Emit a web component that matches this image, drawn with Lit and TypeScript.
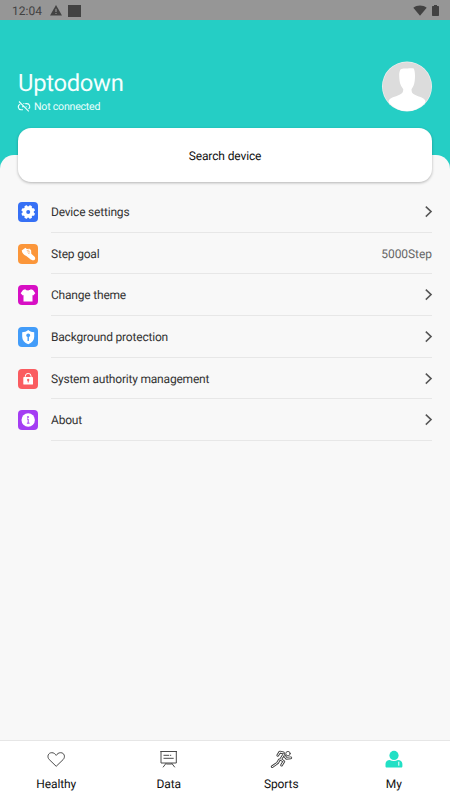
import { LitElement, html, css, svg } from "lit";
import { customElement } from "lit/decorators.js";

const gear = svg`<rect width="20" height="20" rx="4" fill="#3670f5"/>
  <g transform="translate(10.200 10)" fill="#fff"><circle r="5.700"/>
  ${[0, 45, 90, 135, 180, 225, 270, 315].map((a) => svg`<rect x="-1.500" y="-6.900" width="3" height="3" rx=".8" transform="rotate(${a + 22.5})"/>`)}
  <circle r="2" fill="#3670f5"/></g>`;
const shoe = svg`<rect width="20" height="20" rx="4" fill="#fb963a"/>
  <path fill="#fff" d="M3.700 6.500 7.500 3.800l1.200 1.300 3-.4 1.400 1.500.2 3.600 3.300 3c1 1.300.7 2.900-.7 3.400-1.300.4-2.800-.2-4.100-1.400L8.300 11.900C6.300 11.200 4.100 9.200 3.700 6.500Z"/>
  <path stroke="#fb963a" stroke-width=".6" fill="none" d="m8.700 6.600 2.600-.6M9.200 8l2.500-.5M10 9.400l2-.5"/>`;
const shirt = svg`<rect width="20" height="20" rx="4" fill="#d70fc4"/>
  <path fill="#fff" d="M7.200 4.200c1.200 1.600 4.400 1.600 5.600 0L15 5l2.300 3.300-2.100 2.200-.7-.6v6.500h-9V9.900l-.7.600-2.100-2.200L5 5Z"/>`;
const shield = svg`<rect width="20" height="20" rx="4" fill="#429cf9"/>
  <path fill="#fff" d="M10.200 3c1.800 1.500 3.800 2.200 6 2.300v4.500c0 3.500-2.300 5.900-6 7.500-3.700-1.600-6-4-6-7.500V5.300c2.200-.1 4.200-.8 6-2.300Z"/>
  <path fill="#429cf9" d="M10.200 6.400a1.900 1.900 0 0 1 .7 3.700v3.800H9.500v-3.800a1.900 1.900 0 0 1 .7-3.700Z"/>`;
const lock = svg`<rect width="20" height="20" rx="4" fill="#fa5c60"/>
  <path d="M7.300 8V7.300a2.900 2.900 0 0 1 5.800 0V8" fill="none" stroke="#fff" stroke-width="1"/>
  <rect x="5.300" y="8" width="9.700" height="7.600" rx=".7" fill="#fff"/>
  <path fill="#fa5c60" d="M10.200 9.800a1.200 1.200 0 0 1 .5 2.300v1.500h-1v-1.500a1.200 1.200 0 0 1 .5-2.300Z"/>`;
const info = svg`<rect width="20" height="20" rx="4" fill="#a43df3"/>
  <circle cx="10.200" cy="10" r="6.700" fill="#fff"/>
  <circle cx="10" cy="7" r=".9" fill="#a43df3"/><path d="M9 9h1.200v4M8.900 13.200h2.700" fill="none" stroke="#a43df3" stroke-width="1"/>`;

const rows = [
  { label: "Device settings", icon: gear },
  { label: "Step goal", icon: shoe, value: "5000Step" },
  { label: "Change theme", icon: shirt },
  { label: "Background protection", icon: shield },
  { label: "System authority management", icon: lock },
  { label: "About", icon: info },
];

const tabs = [
  {
    label: "Healthy",
    icon: svg`<path d="M10.200 17.300 3.200 10.500C.8 7.900 2 3.700 5.800 3.700c2 0 3.300 1.100 4.400 2.700 1.100-1.600 2.400-2.700 4.400-2.700 3.800 0 5 4.200 2.600 6.800Z" fill="none" stroke="#4a4a4a" stroke-width="1"/>`,
  },
  {
    label: "Data",
    icon: svg`<g fill="none" stroke="#4a4a4a" stroke-width="1"><path d="M1.300 2.500h16.700M2 2.500v11.500h15.300v-11.500M4.500 6.300h5.500M4.500 9.300h10.200M7.300 14 4 18.300M12.500 14l3.300 4.300M7.300 15h5.500"/><path d="M10.800 6.300h1.400"/></g>`,
  },
  {
    label: "Sports",
    icon: svg`<g fill="none" stroke-linecap="round" stroke-linejoin="round">
      <g stroke="#444" stroke-width="2.700"><path d="M8.300 10.800 6.500 14 1.200 17.700M12.900 5.200 9.600 10.500M12.400 3.900 8.800 3 6.800 6.300M13.500 6.800l1.800 2.500 4.500-.5M10 10.500l2.800 2-2.300 3.700"/></g>
      <g stroke="#fff" stroke-width="1"><path d="M8.300 10.800 6.500 14 1.200 17.700M12.900 5.200 9.600 10.500M12.400 3.900 8.800 3 6.800 6.300M13.500 6.800l1.800 2.500 4.500-.5M10 10.500l2.800 2-2.300 3.700"/></g>
      <circle cx="17" cy="4.600" r="2.200" fill="#fff" stroke="#444" stroke-width=".9"/></g>`,
  },
  {
    label: "My",
    icon: svg`<g fill="#22e0c5"><circle cx="10" cy="6.400" r="4.600"/><path d="M1.500 17.300V15.300c0-2.600 1.800-4.300 4.200-4.300 2.500 1.200 5.700 1.200 8.200 0 2.600 0 4.500 1.700 4.500 4.300v2c0 .8-.5 1.200-1.200 1.200H2.700c-.7 0-1.200-.4-1.200-1.200Z"/></g><path d="M14.800 12.700v4" stroke="#fff" stroke-width="1"/>`,
  },
];

@customElement("app-root")
export class AppRoot extends LitElement {
  static styles = css`
    :host { display: flex; flex-direction: column; height: 800px; width: 450px; overflow: hidden; background: #f8f8f8; font-family: Roboto, sans-serif; text-rendering: geometricPrecision; }
    * { box-sizing: border-box; }
    svg { display: block; overflow: visible; flex: none; }
    .status { height: 20px; flex: none; background: #969696; color: #424242; display: flex; align-items: center; padding: 1px 11.500px 0 12px; font-size: 12px; }
    .time { width: 30px; white-space: nowrap; }
    .warn { margin-left: 8px; }
    .square { width: 13px; height: 12px; background: #424242; margin-left: 6px; }
    .wifi { margin-left: auto; }
    .battery { margin-left: 5px; }
    .hero { height: 135px; flex: none; background: #25cec5; padding: 41px 18px 0; display: flex; justify-content: space-between; }
    .name { color: #f4fffe; font-size: 23.800px; letter-spacing: -.3px; line-height: 28px; margin-top: 8px; }
    .link { display: flex; align-items: center; gap: 4px; color: #eafffd; font-size: 10.600px; letter-spacing: -.23px; line-height: 14px; margin-top: 3px; }
    .sheet { flex: 1; background: linear-gradient(#25cec5 0 14px, #f8f8f8 14px); }
    .panel { height: 100%; background: #f8f8f8; border-radius: 14px 14px 0 0; padding: 0 18px; display: flow-root; }
    .search { position: relative; height: 54px; margin-top: -27px; border-radius: 13px; background: #fff; box-shadow: 0 1px 3px rgba(0,0,0,.28); display: flex; align-items: center; justify-content: center; font-size: 12px; letter-spacing: -.12px; color: #111; padding-top: 1px; }
    .list { margin-top: 9px; }
    .row { height: 41.700px; display: flex; align-items: center; gap: 13px; }
    .body { flex: 1; height: 100%; display: flex; align-items: center; justify-content: space-between; border-bottom: 1px solid #e7e7e7; font-size: 12px; letter-spacing: -.2px; color: #333; padding-top: 1px; }
    .value { color: #666; letter-spacing: -.05px; }
    .tabs { height: 60px; flex: none; background: #fff; border-top: 1px solid #e6e6e6; display: grid; grid-template-columns: repeat(4, 1fr); }
    .tab { display: flex; flex-direction: column; align-items: center; padding-top: 8px; font-size: 12px; letter-spacing: -.1px; line-height: 14px; color: #111; gap: 8px; }
  `;

  render() {
    return html`
      <div class="status">
        <span class="time">12:04</span>
        <svg class="warn" width="12" height="11" viewBox="0 0 12 11"><path d="M6 0 12 10.500H0Z" fill="#424242"/><path d="M6 3.700v3.200M6 7.900v1.200" stroke="#969696" stroke-width="1.100"/></svg>
        <div class="square"></div>
        <svg class="wifi" width="14" height="11" viewBox="0 0 14 11"><path d="M.3 2.800C4-.4 10-.4 13.700 2.800L7 10.800Z" fill="#424242"/></svg>
        <svg class="battery" width="7" height="11" viewBox="0 0 7 11"><path d="M2 0h3v1h1.300q.7 0 .7.700v8.600q0 .7-.7.700H.7q-.7 0-.7-.7V1.700Q0 1 .7 1H2Z" fill="#424242"/></svg>
      </div>
      <div class="hero">
        <div>
          <div class="name">Uptodown</div>
          <div class="link">
            <svg width="12" height="12" viewBox="0 0 12 12" fill="none" stroke="#eafffd" stroke-width="1.100"><path d="M1 .500 10.800 10.300M5 8.800H3.500A2.900 2.900 0 0 1 2.200 3.200M5.400 2.500 6.400 2.500M7.200 2.600h1.500a2.900 2.900 0 0 1 1.800 5.300M4 5.700h1.500M7.700 5.700h1"/></svg>
            <span>Not connected</span>
          </div>
        </div>
        <svg width="50" height="50" viewBox="0 0 50 50"><defs><clipPath id="round"><circle cx="25" cy="25.500" r="24.500"/></clipPath></defs><circle cx="25" cy="25.500" r="25" fill="#eee"/><circle cx="25" cy="25.500" r="24.300" fill="#dcdcdc"/><path clip-path="url(#round)" fill="#fff" d="M18.500 8.500C21 7 23 7.800 25.500 7.500 28 7 30 7 31.800 7.500 33 10 33.300 15 32.700 20c-.4 3.500-1.700 6.200-3.200 8.200.1 3 .6 4.300 3.300 5.600C37 36 42 36.500 43.500 40L40 51H10L6.500 40C8 36.500 13 36 17.500 33.800c2.700-1.300 3.700-2.600 3.800-5.600-1.500-2-3.300-4.700-3.700-8.200-.5-4.500-.9-8.500.9-11.500Z"/></svg>
      </div>
      <div class="sheet"><div class="panel">
        <div class="search">Search device</div>
        <div class="list">
          ${rows.map((r) => html`<div class="row">
            <svg width="20" height="20" viewBox="0 0 20 20">${r.icon}</svg>
            <div class="body"><span>${r.label}</span>${r.value
              ? html`<span class="value">${r.value}</span>`
              : html`<svg width="7" height="12" viewBox="0 0 7 12"><path d="m.8.600 5.300 5-5.300 5" fill="none" stroke="#555" stroke-width="1.500"/></svg>`}</div>
          </div>`)}
        </div>
      </div></div>
      <div class="tabs">
        ${tabs.map((t) => html`<div class="tab"><svg width="20" height="20" viewBox="0 0 20 20">${t.icon}</svg><span>${t.label}</span></div>`)}
      </div>`;
  }
}
